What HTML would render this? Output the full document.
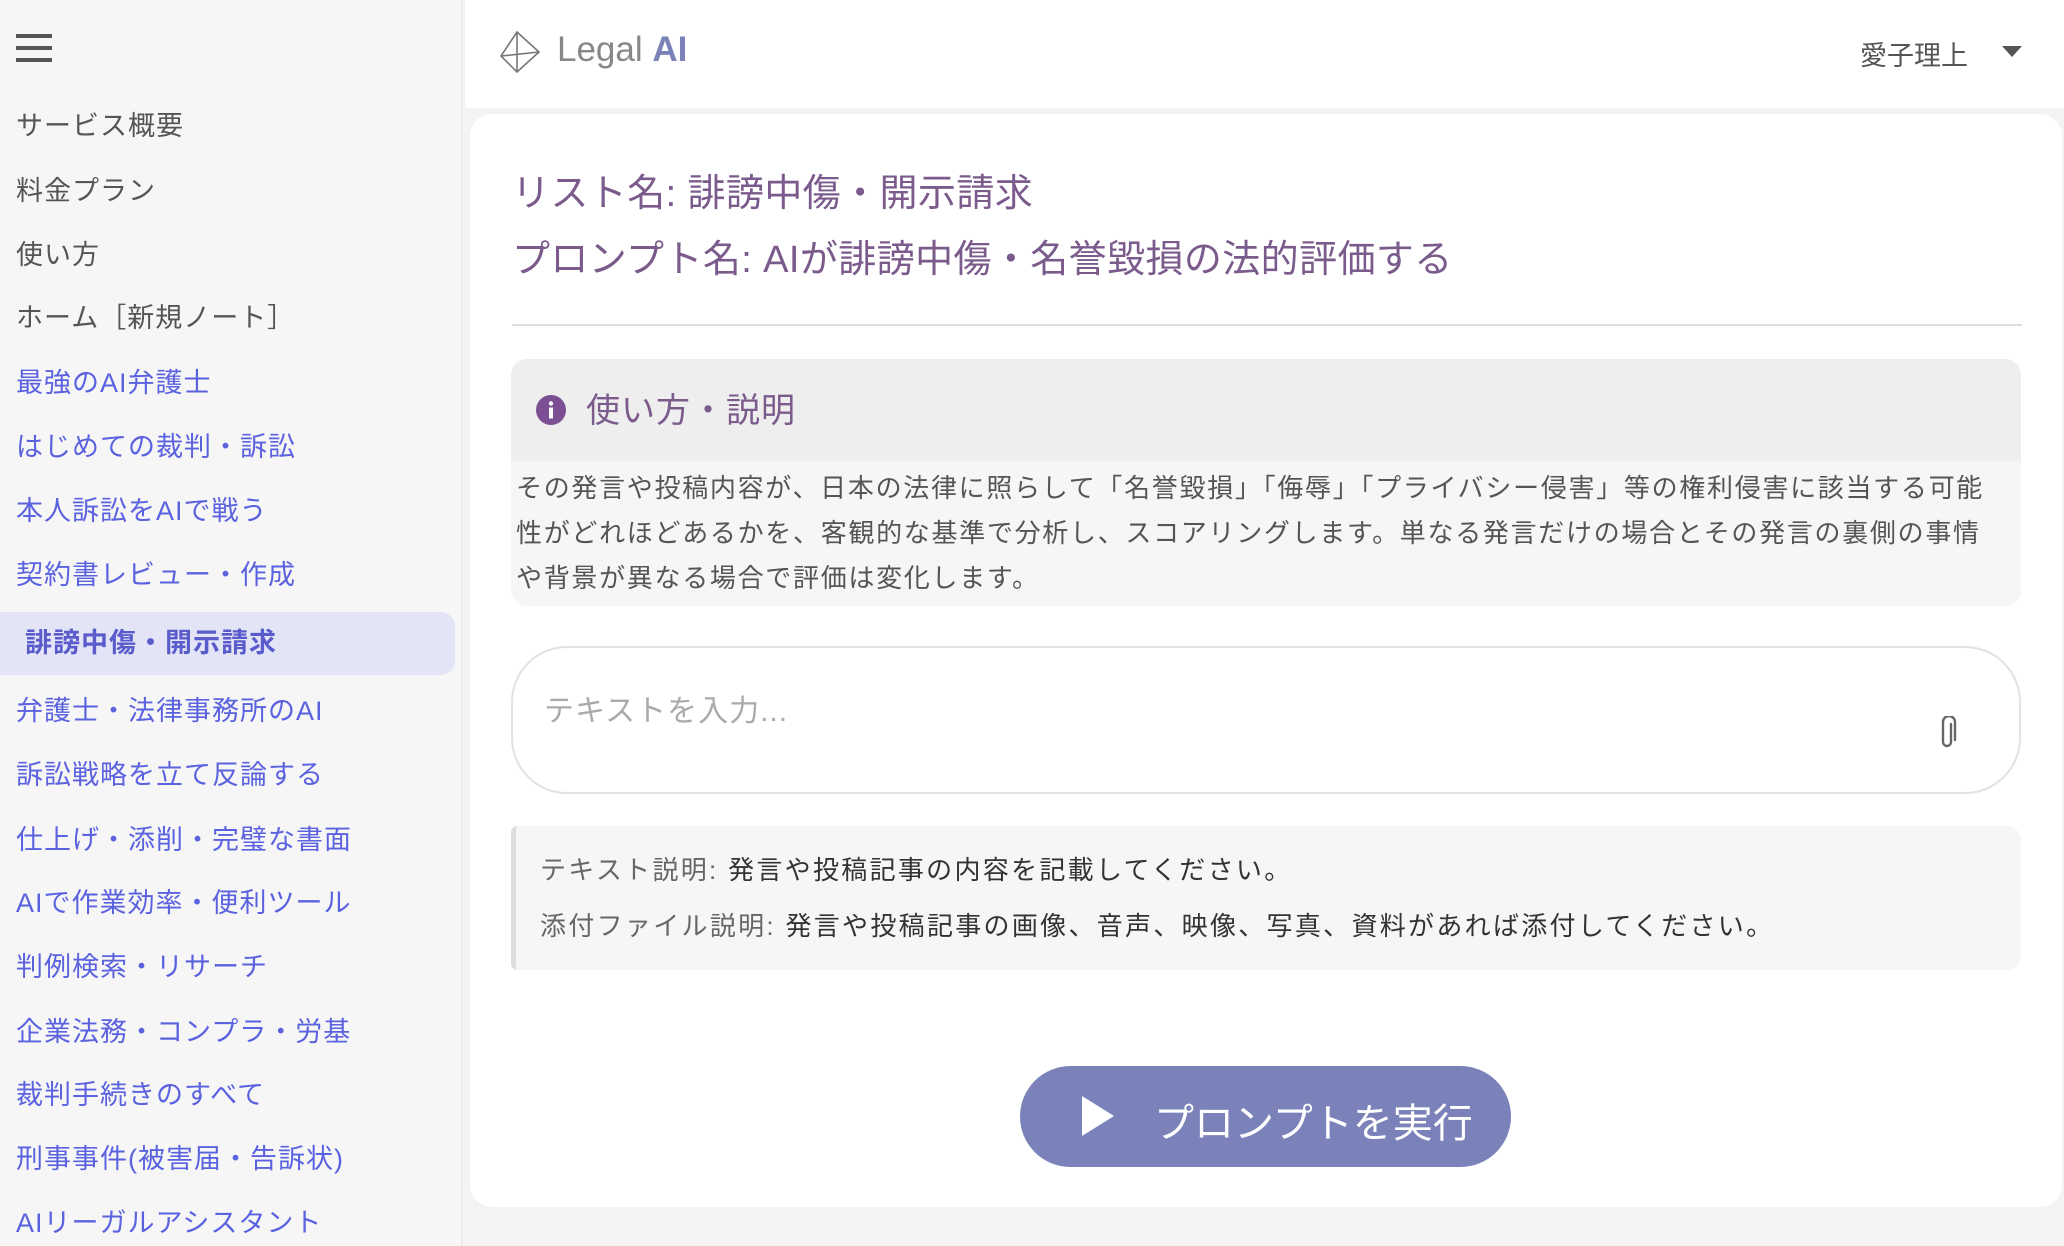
<!DOCTYPE html>
<html><head><meta charset="utf-8"><style>
*{margin:0;padding:0;box-sizing:border-box}
body{width:2064px;height:1246px;overflow:hidden;background:#f3f3f3;font-family:"Liberation Sans","Noto Sans CJK JP",sans-serif;position:relative}
.side{position:absolute;left:0;top:0;width:463px;height:1246px;background:#f6f6f6;border-right:2px solid #ececec}
.ham{position:absolute;left:16px;top:34px;width:36px}
.ham i{display:block;height:4px;background:#555;margin-bottom:8px}
.nav{position:absolute;left:0;top:0;width:463px}
.nav div{position:absolute;left:16px;font-size:27px;line-height:36px;white-space:nowrap;color:#555;letter-spacing:1px}
.nav .l{color:#5b62e0}
.act{position:absolute;left:0;top:612px;width:455px;height:63px;background:#e3e5f7;border-radius:0 14px 14px 0}
.nav .a{left:25px;color:#5a5ccc;font-weight:bold}
.hdr{position:absolute;left:465px;top:0;right:0;height:108px;background:#fff}
.card{position:absolute;left:470px;top:114px;width:1592px;height:1093px;background:#fff;border-radius:22px}
.t{position:absolute;left:512px;font-size:38px;color:#7b5a8c;white-space:nowrap;letter-spacing:0.4px}
.hr{position:absolute;left:512px;top:324px;width:1510px;height:2px;background:#ddd}
.info{position:absolute;left:511px;top:359px;width:1510px;height:247px;background:#f5f6f6;border-radius:16px;overflow:hidden}
.ih{height:102px;background:#eeeeee}
.body{position:absolute;left:516px;top:466px;width:1490px;font-size:26px;line-height:45px;color:#555;letter-spacing:1.7px}
.inp{position:absolute;left:511px;top:646px;width:1510px;height:148px;border:2px solid #e2e2e2;border-radius:56px;background:#fff}
.desc{position:absolute;left:511px;top:826px;width:1510px;height:144px;background:#f5f6f6;border-left:5px solid #ddd;border-radius:6px 14px 14px 6px}
.desc div{position:absolute;left:24px;font-size:26px;color:#333;white-space:nowrap;letter-spacing:2.3px}
.desc span{color:#666}
.btn{position:absolute;left:1020px;top:1066px;width:491px;height:101px;background:#7b82b9;border-radius:51px}
</style></head><body>
<div class="side">
<div class="ham"><i></i><i></i><i></i></div>
<div class="act"></div>
<div class="nav">
<div style="top:108px">サービス概要</div>
<div style="top:173px">料金プラン</div>
<div style="top:237px">使い方</div>
<div style="top:300px">ホーム［新規ノート］</div>
<div class="l" style="top:365px">最強のAI弁護士</div>
<div class="l" style="top:429px">はじめての裁判・訴訟</div>
<div class="l" style="top:493px">本人訴訟をAIで戦う</div>
<div class="l" style="top:557px">契約書レビュー・作成</div>
<div class="a" style="top:625px">誹謗中傷・開示請求</div>
<div class="l" style="top:693px">弁護士・法律事務所のAI</div>
<div class="l" style="top:757px">訴訟戦略を立て反論する</div>
<div class="l" style="top:822px">仕上げ・添削・完璧な書面</div>
<div class="l" style="top:885px">AIで作業効率・便利ツール</div>
<div class="l" style="top:949px">判例検索・リサーチ</div>
<div class="l" style="top:1014px">企業法務・コンプラ・労基</div>
<div class="l" style="top:1077px">裁判手続きのすべて</div>
<div class="l" style="top:1141px">刑事事件(被害届・告訴状)</div>
<div class="l" style="top:1205px">AIリーガルアシスタント</div>
</div>
</div>
<div class="hdr">
<svg style="position:absolute;left:34px;top:30px" width="44" height="44" viewBox="0 0 44 44" fill="none" stroke="#777" stroke-width="1.6"><path d="M18 2 L2 26 L18 42 L40 22 Z M18 2 L18 42 M2 26 L40 22"/></svg>
<div style="position:absolute;left:92px;top:30px;font-size:35px;color:#888">Legal <b style="color:#7b82b9">AI</b></div>
<div style="position:absolute;left:1395px;top:34px;font-size:27px;color:#555">愛子理上</div>
<svg style="position:absolute;left:1537px;top:46px" width="20" height="12"><path d="M0 0H20L10 11Z" fill="#555"/></svg>
</div>
<div class="card"></div>
<div class="t" style="top:162px">リスト名: 誹謗中傷・開示請求</div>
<div class="t" style="top:228px">プロンプト名: AIが誹謗中傷・名誉毀損の法的評価する</div>
<div class="hr"></div>
<div class="info"><div class="ih"></div></div>
<svg style="position:absolute;left:536px;top:395px" width="30" height="30"><circle cx="15" cy="15" r="15" fill="#7b4f92"/><circle cx="15" cy="8.5" r="2.2" fill="#fff"/><rect x="13" y="12.5" width="4" height="11" fill="#fff"/></svg>
<div style="position:absolute;left:586px;top:383px;font-size:34px;color:#7b5a8c;letter-spacing:1px">使い方・説明</div>
<div class="body">その発言や投稿内容が、日本の法律に照らして「名誉毀損」「侮辱」「プライバシー侵害」等の権利侵害に該当する可能性がどれほどあるかを、客観的な基準で分析し、スコアリングします。単なる発言だけの場合とその発言の裏側の事情や背景が異なる場合で評価は変化します。</div>
<div class="inp"></div>
<div style="position:absolute;left:544px;top:686px;font-size:30px;color:#aaa;letter-spacing:1px">テキストを入力...</div>
<svg style="position:absolute;left:1938px;top:716px" width="20" height="36" fill="none" stroke="#666" stroke-width="2.4" stroke-linecap="round"><path d="M13 8 V26 a4 4 0 0 1 -8 0 V6 a6 6 0 0 1 12 0 V24"/></svg>
<div class="desc">
<div style="top:24px"><span>テキスト説明:</span>&nbsp;発言や投稿記事の内容を記載してください。</div>
<div style="top:80px"><span>添付ファイル説明:</span>&nbsp;発言や投稿記事の画像、音声、映像、写真、資料があれば添付してください。</div>
</div>
<div class="btn">
<svg style="position:absolute;left:62px;top:30px" width="32" height="40"><path d="M0 0L32 20L0 40Z" fill="#fff"/></svg>
<div style="position:absolute;left:134px;top:25px;font-size:40px;color:#fff;white-space:nowrap">プロンプトを実行</div>
</div>
</body></html>
